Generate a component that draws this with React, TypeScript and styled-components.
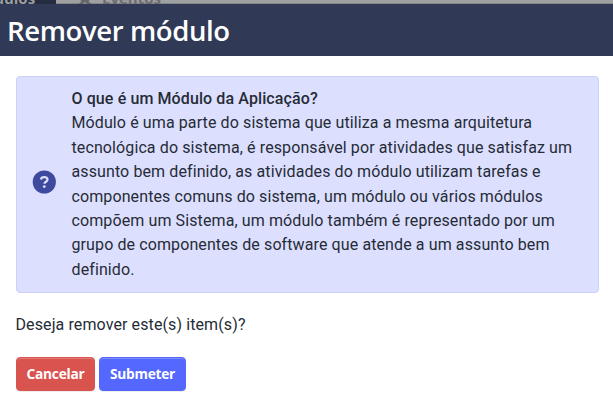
import React from 'react';
import styled, { createGlobalStyle } from 'styled-components';

const GlobalStyle = createGlobalStyle`
  * { box-sizing: border-box; }
  body {
    margin: 0;
    background: #fff;
    color: #252c36;
    font: 400 16px/24.4px Roboto, sans-serif;
    letter-spacing: 0.105px;
    overflow: hidden;
  }
`;

const Page = styled.div`
  width: 613px;
  height: 407px;
  overflow: hidden;
`;

const TabStrip = styled.div`
  display: flex;
  height: 4px;
  overflow: hidden;
  background: #9fa0a2;
  box-shadow: inset 0 -1px 0 #858586;
  font: 700 15px/18px "Open Sans", sans-serif;
  letter-spacing: 0;
`;

const Tab = styled.div<{ $active?: boolean }>`
  display: flex;
  gap: 8px;
  height: 18px;
  margin-top: -11px;
  flex: none;
  width: ${p => (p.$active ? '56px' : '140px')};
  padding-left: ${p => (p.$active ? '0' : '20px')};
  background: ${p => (p.$active ? '#252b40' : 'transparent')};
  color: ${p => (p.$active ? '#9c9da1' : '#6c6d70')};
`;

const TabLabel = styled.span<{ $shift?: boolean }>`
  margin-left: ${p => (p.$shift ? '-29px' : '0')};
`;

const Header = styled.header`
  display: flex;
  height: 52px;
  padding: 0 7px;
  background: #303a56;
`;

const Title = styled.h1`
  margin: 0;
  color: #fff;
  font: 600 27.5px/54px "Open Sans", sans-serif;
  letter-spacing: -0.38px;
  white-space: nowrap;
`;

const Body = styled.main`
  padding: 20px 14px 0 16px;
`;

const Notice = styled.section`
  display: flex;
  align-items: center;
  gap: 15.5px;
  height: 217px;
  padding: 0 16px 0 15px;
  background: #dddfff;
  border: 1px solid #cbcffa;
  border-radius: 4px;
`;

const HelpIcon = styled.svg`
  flex: none;
  width: 24px;
  height: 24px;
  margin-top: -5px;
`;

const NoticeText = styled.p`
  margin: 0;
  white-space: nowrap;
`;

const Lead = styled.strong`
  font-weight: 500;
`;

const Question = styled.p`
  margin: 19px 0 20px -0.5px;
  line-height: 25px;
`;

const Actions = styled.div`
  display: flex;
  gap: 4px;
`;

const Button = styled.button<{ $tone: string; $edge: string; $width: number }>`
  width: ${p => p.$width}px;
  height: 34px;
  padding: 0;
  color: #fff;
  background: ${p => p.$tone};
  border: 1px solid ${p => p.$tone};
  border-radius: 4px;
  box-shadow: inset 0 1px 0 ${p => p.$edge}, 0 1px 1px rgba(0, 0, 0, 0.075);
  font: 700 13.7px/20px "Open Sans", sans-serif;
  letter-spacing: -0.25px;
`;

const lines = [
  'Módulo é uma parte do sistema que utiliza a mesma arquitetura',
  'tecnológica do sistema, é responsável por atividades que satisfaz um',
  'assunto bem definido, as atividades do módulo utilizam tarefas e',
  'componentes comuns do sistema, um módulo ou vários módulos',
  'compõem um Sistema, um módulo também é representado por um',
  'grupo de componentes de software que atende a um assunto bem',
  'definido.',
];

export default function App() {
  return (
    <Page>
      <GlobalStyle />
      <TabStrip>
        <Tab $active><TabLabel $shift>Módulos</TabLabel></Tab>
        <Tab>
          <svg width="18" height="18" viewBox="0 0 18 18" fill="none" stroke="#656669" strokeWidth="3">
            <path d="M3 4 15 17M15 4 3 17M5 12 9 9l4 3" />
          </svg>
          <TabLabel>Eventos</TabLabel>
        </Tab>
      </TabStrip>
      <Header><Title>Remover módulo</Title></Header>
      <Body>
        <Notice>
          <HelpIcon viewBox="0 0 24 24">
            <circle cx="12.3" cy="12" r="11.6" fill="#3d4a9e" />
            <path d="M9 9.5C9.2 8 10.4 7.2 12.2 7.2c2 0 3.3.9 3.3 2.5 0 2.1-3 2-3 4" fill="none" stroke="#dddfff" strokeWidth="2.2" />
            <circle cx="12.3" cy="16.6" r="1.4" fill="#dddfff" />
          </HelpIcon>
          <NoticeText>
            <Lead>O que é um Módulo da Aplicação?</Lead>
            {lines.map(line => <React.Fragment key={line}><br />{line}</React.Fragment>)}
          </NoticeText>
        </Notice>
        <Question>Deseja remover este(s) item(s)?</Question>
        <Actions>
          <Button $tone="#d9534f" $edge="#e27b78" $width={79}>Cancelar</Button>
          <Button $tone="#5468ff" $edge="#7b8aff" $width={87}>Submeter</Button>
        </Actions>
      </Body>
    </Page>
  );
}
